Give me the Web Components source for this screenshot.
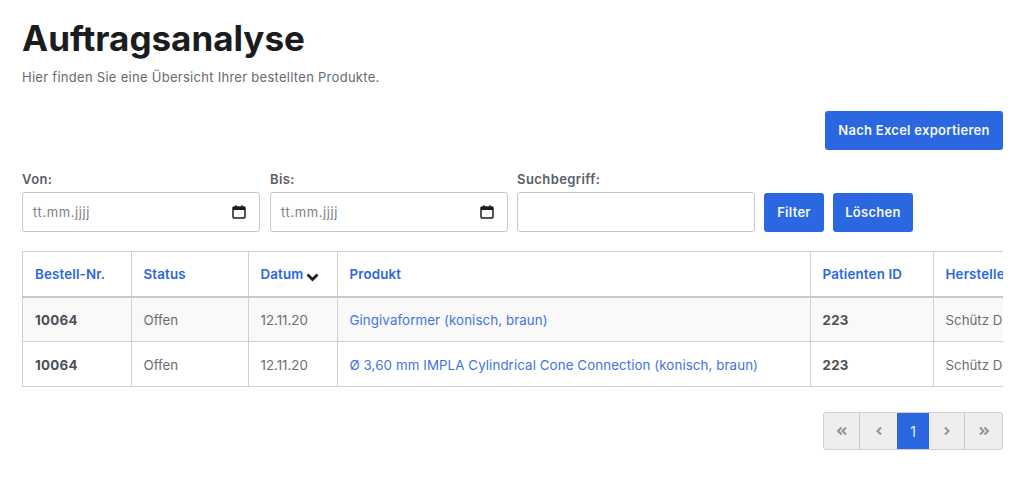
<!DOCTYPE html>
<html lang="de">
<head>
<meta charset="utf-8">
<title>Auftragsanalyse</title>
<style>
  html, body { margin: 0; background: #fff; }
  body { font-family: Inter, "Liberation Sans", sans-serif; overflow: hidden; }
  analysis-page { height: 486px; }
</style>
</head>
<body>
<analysis-page>
  <span slot="title">Auftragsanalyse</span>
  <span slot="lead">Hier finden Sie eine Übersicht Ihrer bestellten Produkte.</span>
  <app-button slot="export" style="--w:178px;--h:39px">Nach Excel exportieren</app-button>
  <filter-bar slot="filters"></filter-bar>
  <orders-table slot="table"></orders-table>
  <page-nav slot="nav"></page-nav>
</analysis-page>

<script>
class AnalysisPage extends HTMLElement {
  constructor() {
    super();
    this.attachShadow({ mode: 'open' }).innerHTML = `
    <style>
      :host { display: block; box-sizing: border-box; padding: 17px 21px 0 22px; }
      h1 { margin: 0; font-size: 35px; line-height: 42px; font-weight: 700; color: #1a1c20; }
      p { margin: 9px 0 0; font-size: 13px; line-height: 18px; color: #666a71; letter-spacing: .28px; }
      .actions { display: flex; justify-content: flex-end; margin-top: 25px; }
      .filters { margin-top: 21px; }
      .table { margin-top: 19px; }
      .nav { display: flex; justify-content: flex-end; margin-top: 25px; }
    </style>
    <h1><slot name="title"></slot></h1>
    <p><slot name="lead"></slot></p>
    <div class="actions"><slot name="export"></slot></div>
    <div class="filters"><slot name="filters"></slot></div>
    <div class="table"><slot name="table"></slot></div>
    <div class="nav"><slot name="nav"></slot></div>
    `;
  }
}

class AppButton extends HTMLElement {
  constructor() {
    super();
    this.attachShadow({ mode: 'open' }).innerHTML = `
    <style>
      :host { display: inline-flex; align-items: center; justify-content: center; box-sizing: border-box;
        width: var(--w); height: var(--h); padding-bottom: 1px; background: #2a67e0; color: #f4f7fe; border-radius: 3px;
        font-size: 13px; font-weight: 600; letter-spacing: .27px; }
    </style>
    <slot></slot>
    `;
  }
}

class DateField extends HTMLElement {
  constructor() {
    super();
    this.attachShadow({ mode: 'open' }).innerHTML = `
    <style>
      :host { display: block; width: 238px; }
      label { display: block; font-size: 13px; line-height: 16px; font-weight: 600; color: #5a5e65; margin-bottom: 5px; letter-spacing: .42px; }
      .box { box-sizing: border-box; height: 40px; display: flex; align-items: center; justify-content: space-between;
        padding: 0 12px 0 10px; border: 1px solid #c4c6cc; border-radius: 3px; background: #fff;
        font-size: 13px; color: #7c8086; letter-spacing: .6px; }
      svg { display: block; }
    </style>
    <label><slot></slot></label>
    <div class="box">
      <span>${this.hasAttribute('search') ? '' : 'tt.mm.jjjj'}</span>
      ${this.hasAttribute('search') ? '' : `<svg width="16" height="16" viewBox="0 0 16 16" fill="none">
        <rect x="2" y="3" width="12" height="11" rx="1" stroke="#1c1c1e" stroke-width="1.5"/>
        <rect x="2" y="3" width="12" height="3" fill="#1c1c1e"/>
        <path d="M5 1.2v2M11 1.2v2" stroke="#1c1c1e" stroke-width="1.4"/>
      </svg>`}
    </div>
    `;
  }
}

class FilterBar extends HTMLElement {
  constructor() {
    super();
    this.attachShadow({ mode: 'open' }).innerHTML = `
    <style>
      :host { display: flex; align-items: flex-end; }
      date-field { margin-right: 10px; }
      date-field:nth-of-type(2) { margin-right: 9px; }
      date-field:nth-of-type(3) { margin-right: 9px; }
      app-button { margin-left: 0; margin-right: 9px; }
    </style>
    <date-field>Von:</date-field>
    <date-field>Bis:</date-field>
    <date-field search>Suchbegriff:</date-field>
    <app-button style="--w:60px;--h:39px">Filter</app-button>
    <app-button style="--w:80px;--h:39px">Löschen</app-button>
    `;
  }
}

class OrdersTable extends HTMLElement {
  constructor() {
    super();
    const row = (product) => `
      <tr>
        <td class="strong">10064</td>
        <td>Offen</td>
        <td>12.11.20</td>
        <td class="link">${product}</td>
        <td class="strong">223</td>
        <td class="clip">Schütz Dental</td>
      </tr>`;
    this.attachShadow({ mode: 'open' }).innerHTML = `
    <style>
      :host { display: block; width: 981px; overflow: hidden; }
      table { border-collapse: collapse; table-layout: fixed; width: 1090px; font-size: 13.3px; }
      th, td { box-sizing: border-box; border: 1px solid #cfd1d5; padding: 0 12px 0 11.500px; text-align: left; white-space: nowrap; overflow: hidden; }
      th:first-child, td:first-child { padding-left: 12px; }
      th { height: 45px; font-weight: 600; color: #2a67e0; border-bottom: 2px solid #c6c8cd; letter-spacing: .18px; }
      td { height: 45px; padding-top: 2px; color: #6a6e74; }
      tbody tr:first-child { background: #f9f9f9; }
      .strong { font-weight: 700; color: #4c5056; letter-spacing: .3px; }
      .link { color: #3f74e3; letter-spacing: .1px; }
      .sort { display: inline-block; vertical-align: -3px; margin-left: 3px; }
    </style>
    <table>
      <colgroup>
        <col style="width:109px"><col style="width:117px"><col style="width:89px">
        <col style="width:473px"><col style="width:123px"><col style="width:179px">
      </colgroup>
      <thead>
        <tr>
          <th>Bestell-Nr.</th>
          <th>Status</th>
          <th>Datum<svg class="sort" width="13" height="10" viewBox="0 0 13 10" fill="none"><path d="M1.500 2.500 6.500 7.500 11.500 2.500" stroke="#1c1c1e" stroke-width="2.800"/></svg></th>
          <th>Produkt</th>
          <th>Patienten ID</th>
          <th>Hersteller</th>
        </tr>
      </thead>
      <tbody>
        ${row('Gingivaformer (konisch, braun)')}
        ${row('Ø 3,60 mm IMPLA Cylindrical Cone Connection (konisch, braun)')}
      </tbody>
    </table>
    `;
  }
}

class PageNav extends HTMLElement {
  constructor() {
    super();
    const chevrons = (d) => `<svg width="14" height="12" viewBox="0 0 14 12" fill="none" stroke="#8f9299" stroke-width="2">${d}</svg>`;
    this.attachShadow({ mode: 'open' }).innerHTML = `
    <style>
      :host { display: inline-flex; height: 38px; box-sizing: border-box; border: 1px solid #cfd0d3; border-radius: 3px; background: #eeeeee; overflow: hidden; }
      div { display: flex; align-items: center; justify-content: center; box-sizing: border-box; border-right: 1px solid #c9cacd; }
      div:last-child { border-right: 0; }
      .current { background: #2a67e0; color: #e8effc; font-size: 14px; border-right: 0; margin: -1px 0; }
      .before { border-right: 0; }
      svg { display: block; }
    </style>
    <div style="width:36px">${chevrons('<path d="M6.500 2.500 3 6 6.500 9.500M11 2.500 7.500 6 11 9.500"/>')}</div>
    <div class="before" style="width:37px">${chevrons('<path d="M9 2.500 5.500 6 9 9.500"/>')}</div>
    <div class="current" style="width:32px">1</div>
    <div style="width:36px">${chevrons('<path d="M5 2.500 8.500 6 5 9.500"/>')}</div>
    <div style="width:37px">${chevrons('<path d="M3 2.500 6.500 6 3 9.500M7.500 2.500 11 6 7.500 9.500"/>')}</div>
    `;
  }
}

customElements.define('analysis-page', AnalysisPage);
customElements.define('app-button', AppButton);
customElements.define('date-field', DateField);
customElements.define('filter-bar', FilterBar);
customElements.define('orders-table', OrdersTable);
customElements.define('page-nav', PageNav);
</script>
</body>
</html>
